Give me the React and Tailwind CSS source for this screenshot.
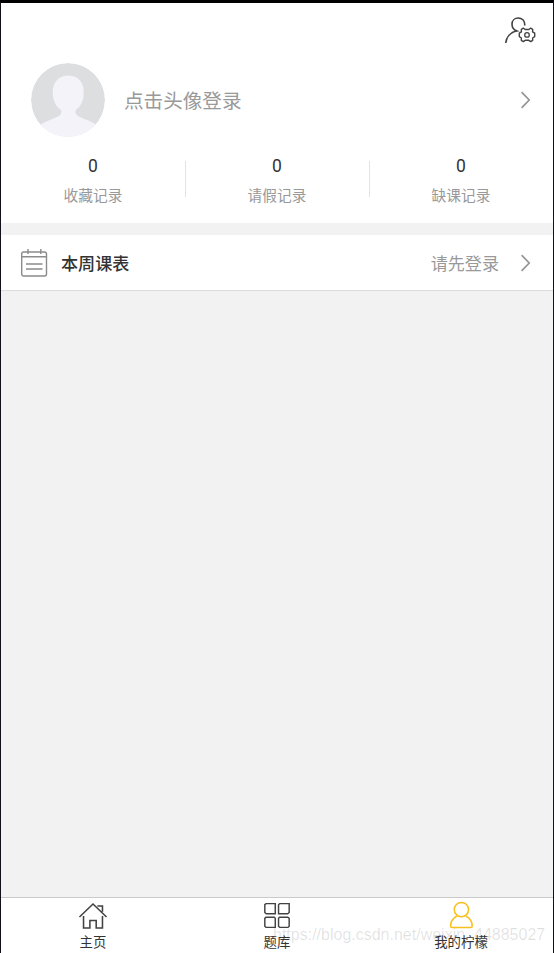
import React from 'react';

const UserSettingsIcon = () => (
  <svg width="32" height="28" viewBox="0 0 32 28" fill="none" stroke="#424242" strokeWidth="1.6">
    <path d="M1.7 27C2.2 21.5 6 16.3 12.9 14.9C9.2 13.5 8 11 8 8.2C8 4.5 10.7 2 14.3 2C18 2 20.7 4.6 20.7 8V9.6" />
    <path d="M19.3 12.2L21.2 13.5H24.8L26.7 12.2L28.7 13.4L28.6 15.8L30.7 17.2V20.6L28.6 22L28.7 24.4L26.7 25.6L24.8 24.3H21.2L19.3 25.6L17.3 24.4L17.4 22L15.3 20.6V17.2L17.4 15.8L17.3 13.4Z" strokeWidth="1.4" strokeLinejoin="round" />
    <circle cx="23" cy="18.9" r="2.3" strokeWidth="1.3" />
  </svg>
);

const Avatar = () => (
  <svg width="74" height="74" viewBox="0 0 74 74" className="rounded-full">
    <circle cx="37" cy="37" r="37" fill="#dcdee0" />
    <path d="M37.4 12.5C27.9 12.5 21.7 19 21.7 29C21.7 37 24.9 43.5 29.4 46.5C31.2 48.5 30.6 51.5 27.4 53.2C21.4 56.4 14.4 58 8.9 62V74H65.9V62C60.4 58 53.4 56.4 47.4 53.2C44.2 51.5 43.6 48.5 45.4 46.5C49.9 43.5 52.8 37 52.8 29C52.8 19 46.9 12.5 37.4 12.5Z" fill="#f3f3f9" />
  </svg>
);

const Chevron = () => (
  <svg width="10" height="18" viewBox="0 0 10 18" fill="none" stroke="#959595" strokeWidth="1.7">
    <path d="M0.6 1.2L8.2 9L0.6 16.8" />
  </svg>
);

const CalendarIcon = () => (
  <svg width="28" height="30" viewBox="0 0 28 30" fill="none" stroke="#8b8b8b" strokeWidth="1.4">
    <rect x="1.7" y="4" width="24.8" height="24" rx="2" />
    <path d="M1.7 8.8H26.5M8 1V6M20.8 1V6M6 16H22.5M6 21H22.5" />
  </svg>
);

const HomeIcon = () => (
  <svg width="30" height="30" viewBox="0 0 30 30" fill="none" stroke="#424242" strokeWidth="1.6">
    <path d="M1 16.5L15 3.1L29 16.5M5.2 15.5V28H11.8V20.2H18.3V28H24.8V15.5M19.5 5.2H24.8V11" />
  </svg>
);

const GridIcon = () => (
  <svg width="30" height="30" viewBox="0 0 30 30" fill="none" stroke="#424242" strokeWidth="1.5">
    <path d="M3.6 2.7H13.2V13.2H3.9L2.4 11.9V3.7ZM17.8 2.7H27.6V11.9L26.1 13.2H16.6V3.9ZM3.6 16.8H12.2L13.2 17.8V27.3H3.6L2.4 26.1V18ZM17.6 16.8H26.2L27.6 18V26.1L26.4 27.3H17.8L16.6 26.1V17.8Z" />
  </svg>
);

const PersonIcon = () => (
  <svg width="30" height="30" viewBox="0 0 30 30" fill="none" stroke="#fac01e" strokeWidth="1.6">
    <circle cx="15.4" cy="8.9" r="7.4" />
    <path d="M10.7 15.5C6.7 17.8 4.2 21.2 4.2 25.8Q4.2 27.4 5.8 27.4H25Q26.6 27.4 26.6 25.8C26.6 21.2 24.1 17.8 20.1 15.5" strokeLinejoin="round" />
  </svg>
);

const stats = [
  { label: '收藏记录', value: 0 },
  { label: '请假记录', value: 0 },
  { label: '缺课记录', value: 0 },
];

const tabs = [
  { label: '主页', icon: HomeIcon },
  { label: '题库', icon: GridIcon },
  { label: '我的柠檬', icon: PersonIcon },
];

const Stat = ({ label, value, divider }) => (
  <div className="relative flex-1 flex flex-col items-center">
    <span className="pt-px text-[17.5px] leading-6 text-[#333] font-['Roboto']">{value}</span>
    <span className="mt-[7px] text-[14.7px] leading-[22px] text-[#999]">{label}</span>
    {divider && <i className="absolute right-[-1px] top-2 w-px h-9 bg-[#e3e3e3]" />}
  </div>
);

export default function App() {
  return (
    <div className="relative h-[953px] w-[554px] overflow-hidden flex flex-col bg-[#f2f2f2] border-x border-t-[3px] border-[#111118] border-t-black font-['Roboto','Noto_Sans_CJK_SC',sans-serif]">
      <header className="h-[220px] shrink-0 bg-white">
        <div className="h-[60px] flex justify-end pt-[13px] pr-[17px]">
          <UserSettingsIcon />
        </div>
        <div className="h-[74px] flex items-center pl-[30px] pr-[22px]">
          <Avatar />
          <span className="ml-[19px] pt-[3px] flex-1 text-[19.6px] leading-7 text-[#999]">点击头像登录</span>
          <Chevron />
        </div>
        <div className="flex pt-4">
          {stats.map((stat, i) => (
            <Stat key={stat.label} {...stat} divider={i < stats.length - 1} />
          ))}
        </div>
      </header>

      <section className="mt-3 h-14 shrink-0 flex items-center bg-white border-b border-[#dcdcdc] pl-[19px] pr-[22px]">
        <CalendarIcon />
        <span className="ml-[13px] pt-[2px] flex-1 text-[17.1px] leading-6 font-medium text-[#333]">本周课表</span>
        <span className="mr-[22px] pt-[2px] text-[17.1px] leading-6 text-[#999]">请先登录</span>
        <Chevron />
      </section>

      <nav className="mt-auto h-14 shrink-0 flex bg-white border-t border-[#cacaca]">
        {tabs.map(({ label, icon: Icon }) => (
          <div key={label} className="flex-1 flex flex-col items-center pt-[3px]">
            <Icon />
            <span className="relative z-10 mt-[3px] text-[13.4px] leading-5 text-[#333]">{label}</span>
          </div>
        ))}
      </nav>

      <span className="absolute left-[272px] top-[922px] text-[16px] leading-5 whitespace-nowrap text-black/12 font-['Liberation_Sans']">
        https://blog.csdn.net/weixin_44885027
      </span>
    </div>
  );
}
